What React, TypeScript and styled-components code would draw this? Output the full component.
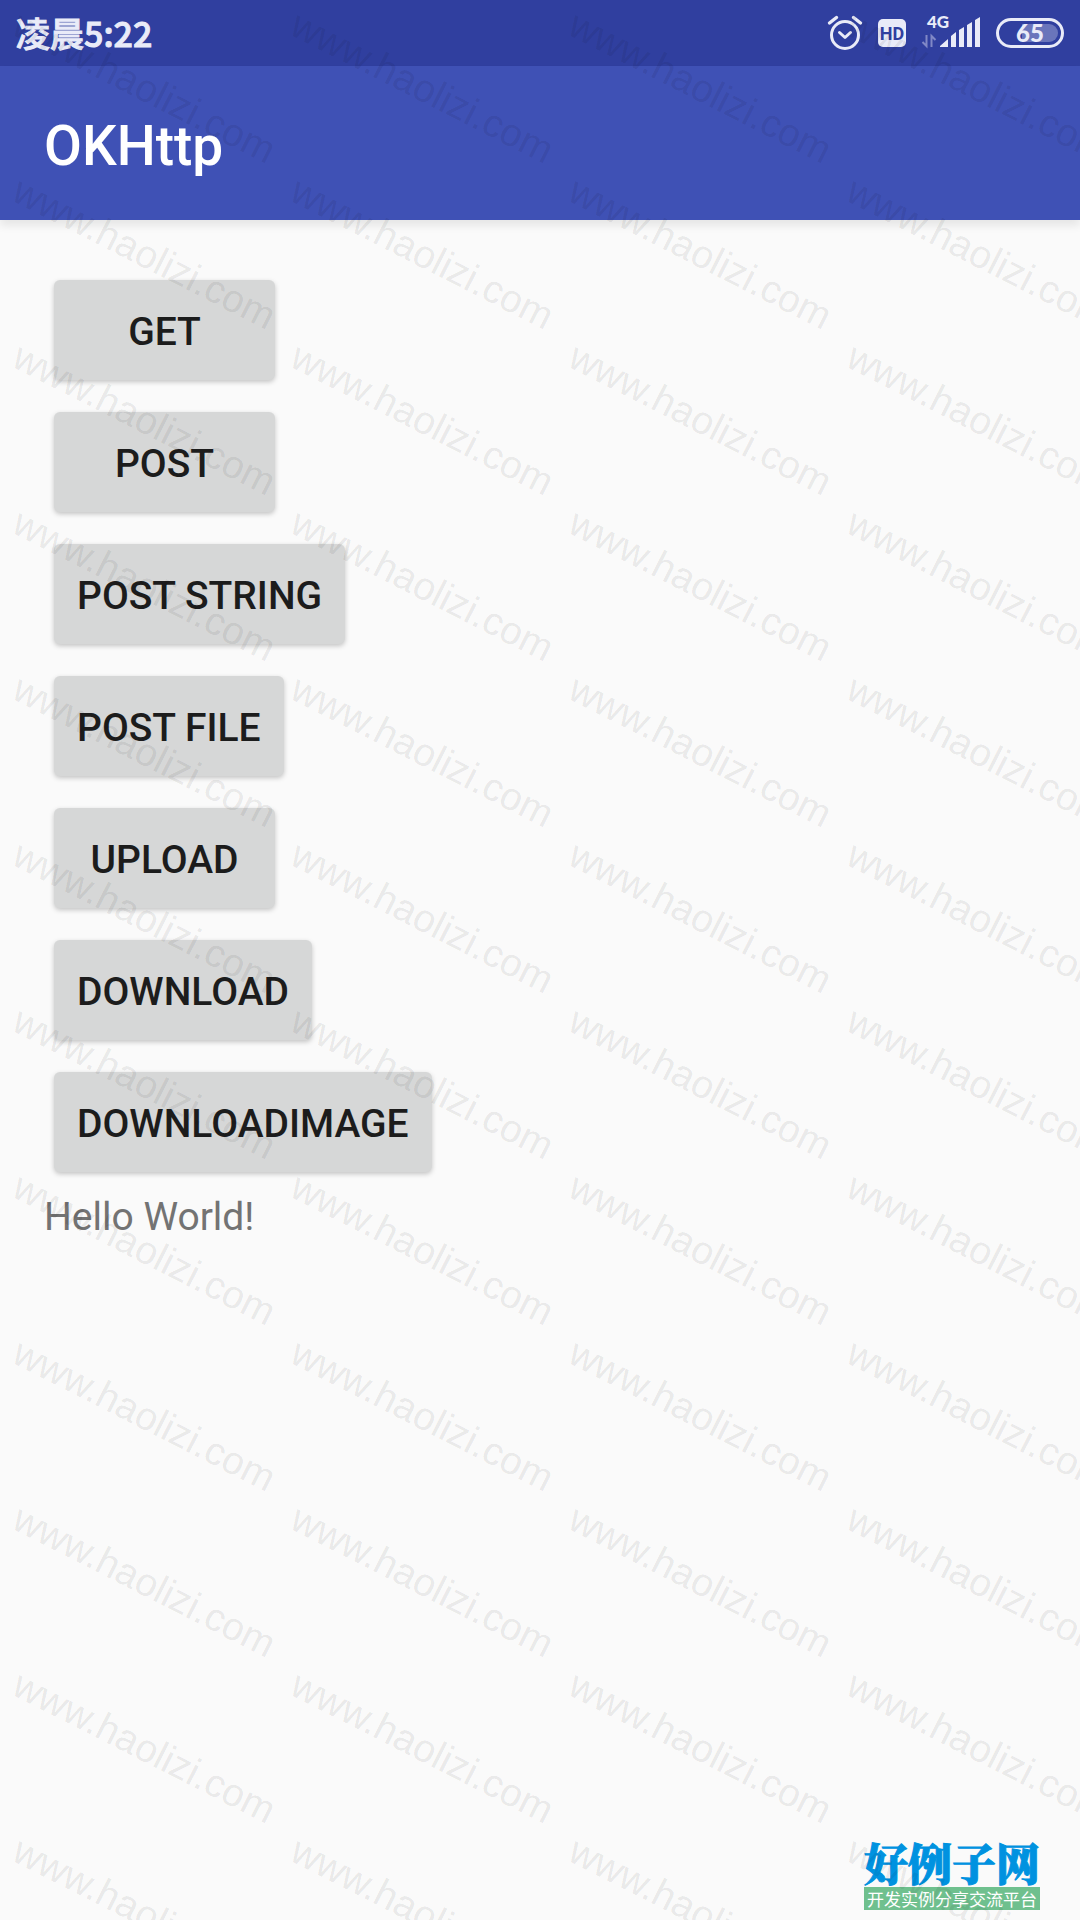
import React from "react";
import styled, { createGlobalStyle } from "styled-components";

const GlobalStyle = createGlobalStyle`
  *, *::before, *::after { box-sizing: border-box; }
  body {
    margin: 0;
    background: #fafafa;
    font-family: Roboto, "Noto Sans CJK SC", sans-serif;
  }
`;

const Screen = styled.div`
  position: relative;
  display: flex;
  flex-direction: column;
  min-height: 100vh;
  overflow: hidden;
`;

const StatusBar = styled.div`
  display: flex;
  align-items: center;
  justify-content: space-between;
  height: 66px;
  padding: 0 16px;
  background: #303f9f;
  color: #e9ebf8;
`;

const Clock = styled.time`
  font-family: "Noto Sans CJK SC", sans-serif;
  font-size: 34px;
  font-weight: 500;
  line-height: 66px;
  -webkit-text-stroke: 1px #e9ebf8;
`;

const StatusIcons = styled.div`
  display: flex;
  align-items: center;
  gap: 15px;

  svg { display: block; }
`;

const HdBadge = styled.span`
  width: 28px;
  height: 28px;
  border-radius: 5px;
  background: #e9ebf8;
  color: #303f9f;
  font-size: 18px;
  font-weight: 700;
  line-height: 30px;
  text-align: center;
`;

const Battery = styled.span`
  display: flex;
  width: 68px;
  height: 30px;
  padding: 3px;
  border: 3px solid #e9ebf8;
  border-radius: 15px;
`;

const BatteryLevel = styled.span`
  flex: 1;
  border-radius: 9px;
  background: linear-gradient(to right, #303f9f 35%, #6a75bb 35%);
  font-family: Lato, sans-serif;
  font-size: 24px;
  font-weight: 900;
  line-height: 18px;
  text-align: center;
`;

const AppBar = styled.header`
  display: flex;
  align-items: center;
  height: 154px;
  padding: 6px 44px 0;
  background: #3f51b5;
  box-shadow: 0 6px 8px rgba(0, 0, 0, 0.08);
`;

const Title = styled.h1`
  margin: 0;
  color: #fff;
  font-size: 55px;
  font-weight: 500;
  line-height: 64px;
`;

const Content = styled.main`
  padding: 60px 44px 44px;
`;

const Actions = styled.div`
  display: flex;
  flex-direction: column;
  align-items: flex-start;
  gap: 32px;
  padding: 0 10px;
`;

const ActionButton = styled.button`
  min-width: 221px;
  height: 100px;
  padding: 4px 23px 0;
  border: 0;
  border-radius: 6px;
  background: #d6d7d7;
  box-shadow: 0 2px 5px rgba(0, 0, 0, 0.22);
  color: #1c1c1c;
  font-family: inherit;
  font-size: 39px;
  font-weight: 500;
  text-transform: uppercase;
`;

const Result = styled.p`
  margin: 22px 0 0;
  color: #737373;
  font-size: 39px;
  line-height: 46px;
`;

const Watermark = styled.div`
  position: absolute;
  inset: 0;
  display: grid;
  grid-template-columns: repeat(4, 278px);
  grid-auto-rows: 166px;
  padding: 4px 0 0 25px;
  overflow: hidden;
  pointer-events: none;
  user-select: none;
`;

const Mark = styled.span`
  justify-self: start;
  align-self: start;
  transform: rotate(27deg);
  transform-origin: 0 0;
  color: rgba(0, 0, 0, 0.085);
  font-family: "Liberation Sans", Arial, sans-serif;
  font-size: 39px;
  line-height: 40px;
  white-space: nowrap;
`;

const Brand = styled.div`
  position: absolute;
  right: 40px;
  bottom: 10px;
  width: 176px;
  font-family: "Noto Serif CJK SC", "Noto Sans CJK SC", sans-serif;
  text-align: center;
  white-space: nowrap;
`;

const BrandName = styled.div`
  color: #0092e0;
  font-size: 44px;
  font-weight: 900;
  line-height: 50px;
  -webkit-text-stroke: 1px #0092e0;
`;

const BrandLine = styled.div`
  background: #6fc08e;
  color: #fff;
  font-family: "Noto Sans CJK SC", sans-serif;
  font-size: 17px;
  line-height: 23px;
`;

const ACTIONS = ["Get", "Post", "Post String", "Post File", "Upload", "Download", "DownloadImage"];
const MARKS = Array.from({ length: 48 }, (_, i) => i);

const AlarmIcon = () => (
  <svg width="36" height="36" viewBox="0 0 36 36" fill="none" stroke="#e9ebf8" strokeLinecap="round" strokeLinejoin="round" aria-label="Alarm">
    <circle cx="18" cy="20" r="13.5" strokeWidth="3" />
    <path d="M12.5 17.5 L18 22.5 L23.5 17.5" strokeWidth="3" />
    <path d="M2.5 8 L9.5 2.5 M33.5 8 L26.5 2.5" strokeWidth="3.4" />
  </svg>
);

const SignalIcon = () => (
  <svg width="60" height="36" viewBox="0 0 60 36" fill="#e9ebf8" aria-label="4G signal">
    <text x="6" y="13" fontFamily="Lato, sans-serif" fontSize="17" fontWeight="900">4G</text>
    <path d="M19 32 V31 L27 24 V32 Z M30 32 V21 L35 17 V32 Z M38 32 V15 L43 12 V32 Z M46 32 V10 L51 7 V32 Z M54 32 V5 L59 2 V32 Z" />
    <path d="M5.5 20 V31 L1.5 27 M10.5 32 V21 L14.5 25" fill="none" stroke="#8088c6" strokeWidth="2" />
  </svg>
);

export default function App() {
  return (
    <Screen>
      <GlobalStyle />
      <StatusBar>
        <Clock>凌晨5:22</Clock>
        <StatusIcons>
          <AlarmIcon />
          <HdBadge>HD</HdBadge>
          <SignalIcon />
          <Battery>
            <BatteryLevel>65</BatteryLevel>
          </Battery>
        </StatusIcons>
      </StatusBar>
      <AppBar>
        <Title>OKHttp</Title>
      </AppBar>
      <Content>
        <Actions>
          {ACTIONS.map((label) => (
            <ActionButton key={label} type="button">{label}</ActionButton>
          ))}
        </Actions>
        <Result>Hello World!</Result>
      </Content>
      <Brand>
        <BrandName>好例子网</BrandName>
        <BrandLine>开发实例分享交流平台</BrandLine>
      </Brand>
      <Watermark aria-hidden="true">
        {MARKS.map((i) => (
          <Mark key={i}>www.haolizi.com</Mark>
        ))}
      </Watermark>
    </Screen>
  );
}
